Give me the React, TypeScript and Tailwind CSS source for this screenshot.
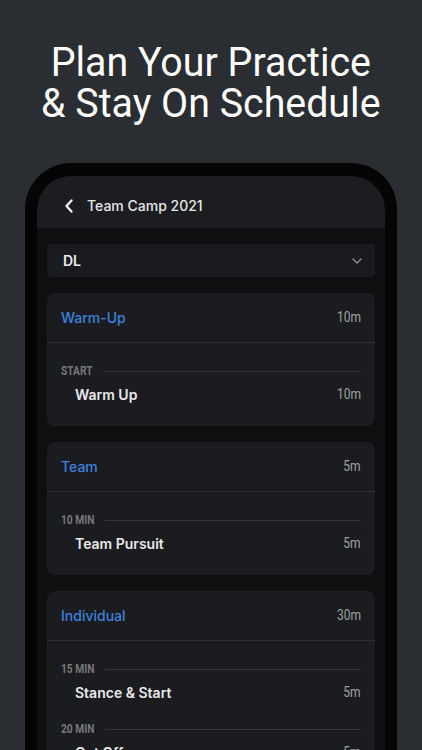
import React from "react";

const rob = { fontFamily: 'Roboto, "Liberation Sans", sans-serif' };
const ui = { fontFamily: 'Inter, "Liberation Sans", sans-serif' };

type Item = { label: string; name: string; dur: string };
type Section = { title: string; dur: string; items: Item[] };

const sections: Section[] = [
  { title: "Warm-Up", dur: "10m", items: [{ label: "START", name: "Warm Up", dur: "10m" }] },
  { title: "Team", dur: "5m", items: [{ label: "10 MIN", name: "Team Pursuit", dur: "5m" }] },
  {
    title: "Individual",
    dur: "30m",
    items: [
      { label: "15 MIN", name: "Stance & Start", dur: "5m" },
      { label: "20 MIN", name: "Cut Off", dur: "5m" },
      { label: "25 MIN", name: "Hand Fighting", dur: "5m" },
    ],
  },
];

function Dur({ v }: { v: string }) {
  return (
    <span className="inline-block text-[15px] text-[#a0a1a3] scale-x-[0.8] origin-right" style={rob}>
      {v}
    </span>
  );
}

function Card({ s }: { s: Section }) {
  return (
    <div className="rounded-[8px] bg-[#1b1c1f] shrink-0">
      <div className="h-[50px] px-[14px] flex items-center justify-between border-b border-[#2d2f33]">
        <span className="text-[14px] font-medium text-[#3d82df]" style={ui}>{s.title}</span>
        <Dur v={s.dur} />
      </div>
      <div className="px-[14px] pt-[20px] pb-[21px] flex flex-col gap-[18px]">
        {s.items.map((it) => (
          <div key={it.name} className="flex flex-col gap-[4px]">
            <div className="h-[16px] flex items-center gap-[10px]">
              <span className="inline-block text-[12px] font-bold text-[#77797c] scale-x-[0.85] origin-left -mr-[5px]" style={rob}>{it.label}</span>
              <div className="flex-1 h-px bg-[#34363a]" />
            </div>
            <div className="h-[22px] flex items-center justify-between pl-[14px]">
              <span className="text-[14px] font-semibold text-[#e9e9ea]" style={ui}>{it.name}</span>
              <Dur v={it.dur} />
            </div>
          </div>
        ))}
      </div>
    </div>
  );
}

export default function App() {
  return (
    <div className="w-[422px] h-[750px] overflow-hidden bg-[#2a2d31] flex flex-col items-center">
      <div className="pt-[42px] text-center text-white text-[41px] leading-[41px] scale-x-[0.96]" style={rob}>
        <div className="whitespace-nowrap">Plan Your Practice</div>
        <div className="whitespace-nowrap">&amp; Stay On Schedule</div>
      </div>
      <div className="mt-[39px] w-[372px] shrink-0 h-[700px] rounded-[46px] bg-[#050505] p-[12px] pt-[13px] pb-0">
        <div className="h-full rounded-t-[34px] overflow-hidden bg-[#0e0f11] flex flex-col">
          <div className="h-[52px] shrink-0 bg-[#1b1d20] flex items-end pb-[13px] pl-[27px] gap-[13px]">
            <svg width="10" height="16" viewBox="0 0 10 16" fill="none" className="mb-[1px]">
              <polyline points="7.5,2.5 2.5,8 7.5,13.5" stroke="#ececec" strokeWidth="2.4" strokeLinecap="round" strokeLinejoin="round" />
            </svg>
            <span className="text-[14px] leading-[18px] font-medium text-[#e6e6e7]" style={ui}>Team Camp 2021</span>
          </div>
          <div className="px-[10px] pt-[16px] flex flex-col gap-[16px]">
            <div className="h-[33px] rounded-[4px] bg-[#1a1b1e] flex items-center justify-between pl-[16px] pr-[13px]">
              <span className="text-[14px] font-semibold text-[#ebebec]" style={ui}>DL</span>
              <svg width="10" height="6" viewBox="0 0 10 6" fill="none">
                <polyline points="1,1 5,5 9,1" stroke="#8c8d90" strokeWidth="1.4" strokeLinecap="round" strokeLinejoin="round" />
              </svg>
            </div>
            {sections.map((s) => (
              <Card key={s.title} s={s} />
            ))}
          </div>
        </div>
      </div>
    </div>
  );
}
